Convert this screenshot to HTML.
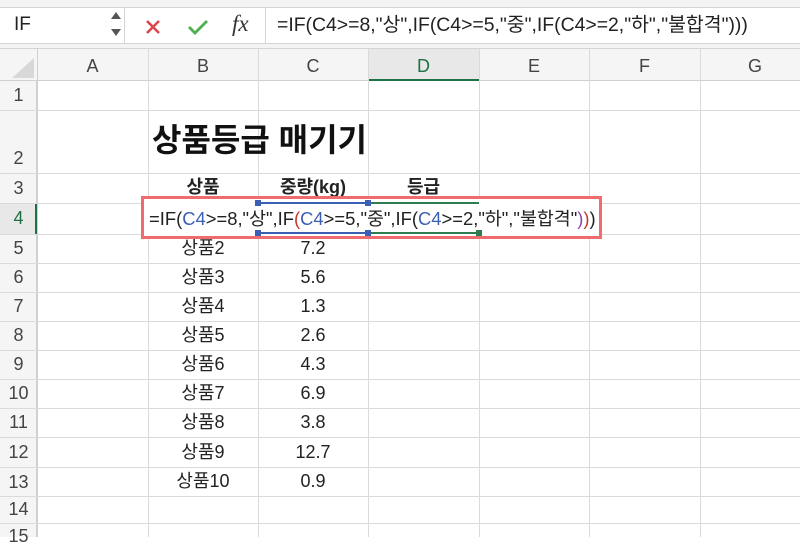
<!DOCTYPE html>
<html><head><meta charset="utf-8"><style>
*{margin:0;padding:0;box-sizing:border-box}
body{width:800px;height:537px;overflow:hidden;background:#fff;font-family:"Liberation Sans","Noto Sans CJK KR",sans-serif;position:relative;color:#222}
.abs{position:absolute}
.vl{position:absolute;width:1px;background:#dadada}
.hl{position:absolute;height:1px;background:#dadada;left:0;width:800px}
.ch{position:absolute;top:48px;height:33px;line-height:36px;text-align:center;font-size:18px;color:#444}
.rn{position:absolute;left:0;width:37px;text-align:center;font-size:18px;color:#444;height:29px;line-height:29px}
.c{position:absolute;text-align:center;font-size:18px;color:#222;height:29px;line-height:29px;white-space:nowrap}
</style></head><body>
<div class="abs" style="left:0;top:0;width:800px;height:48px;background:#f3f3f3"></div>
<div class="abs" style="left:0;top:7px;width:800px;height:37px;background:#fff;border-top:1px solid #d4d4d4;border-bottom:1px solid #d4d4d4"></div>
<div class="abs" style="left:0;top:7px;width:125px;height:37px;border-right:1px solid #d4d4d4;font-size:19px;line-height:36px;padding-left:14px">IF</div>
<div class="abs" style="left:111px;top:12px;width:0;height:0;border-left:5px solid transparent;border-right:5px solid transparent;border-bottom:7px solid #555"></div>
<div class="abs" style="left:111px;top:29px;width:0;height:0;border-left:5px solid transparent;border-right:5px solid transparent;border-top:7px solid #555"></div>
<svg class="abs" style="left:145px;top:19px" width="16" height="16"><path d="M2 2L14 14M14 2L2 14" stroke="#d9474b" stroke-width="2.6"/></svg>
<svg class="abs" style="left:187px;top:18px" width="22" height="18"><path d="M2 9L8 15L20 3" stroke="#4caf50" stroke-width="2.8" fill="none"/></svg>
<div class="abs" style="left:232px;top:11px;font-family:'Liberation Serif',serif;font-style:italic;font-size:23px;color:#333">fx</div>
<div class="abs" style="left:265px;top:7px;width:1px;height:37px;background:#d4d4d4"></div>
<div class="abs" style="left:277px;top:7px;font-size:19.4px;line-height:37px;height:37px;color:#222;white-space:nowrap">=IF(C4&gt;=8,"상",IF(C4&gt;=5,"중",IF(C4&gt;=2,"하","불합격")))</div>
<div class="abs" style="left:0;top:48px;width:800px;height:33px;background:#f5f5f5;border-top:1px solid #d4d4d4;border-bottom:1px solid #d0d0d0"></div>
<div class="abs" style="left:368px;top:49px;width:111px;height:32px;background:#e8e8e8"></div>
<div class="abs" style="left:368px;top:79px;width:111px;height:2px;background:#1e7145"></div>
<div class="abs" style="left:12px;top:58px;width:0;height:0;border-left:22px solid transparent;border-bottom:20px solid #d8d8d8"></div>
<div class="abs" style="left:0;top:81px;width:37px;height:456px;background:#f5f5f5;border-right:1px solid #d0d0d0"></div>
<div class="abs" style="left:0;top:203px;width:37px;height:31px;background:#e8e8e8"></div>
<div class="abs" style="left:35px;top:203px;width:2px;height:31px;background:#1e7145"></div>
<div class="ch" style="left:37px;width:111px">A</div>
<div class="ch" style="left:148px;width:110px">B</div>
<div class="ch" style="left:258px;width:110px">C</div>
<div class="ch" style="left:368px;width:111px;color:#1e7145">D</div>
<div class="ch" style="left:479px;width:110px">E</div>
<div class="ch" style="left:589px;width:111px">F</div>
<div class="ch" style="left:700px;width:110px">G</div>
<div class="vl" style="left:37px;top:48px;height:489px;background:#d0d0d0"></div>
<div class="vl" style="left:148px;top:48px;height:489px"></div>
<div class="vl" style="left:258px;top:48px;height:489px"></div>
<div class="vl" style="left:368px;top:48px;height:489px"></div>
<div class="vl" style="left:479px;top:48px;height:489px"></div>
<div class="vl" style="left:589px;top:48px;height:489px"></div>
<div class="vl" style="left:700px;top:48px;height:489px"></div>
<div class="hl" style="top:110px"></div>
<div class="hl" style="top:173px"></div>
<div class="hl" style="top:203px"></div>
<div class="hl" style="top:234px"></div>
<div class="hl" style="top:263px"></div>
<div class="hl" style="top:292px"></div>
<div class="hl" style="top:321px"></div>
<div class="hl" style="top:350px"></div>
<div class="hl" style="top:379px"></div>
<div class="hl" style="top:408px"></div>
<div class="hl" style="top:437px"></div>
<div class="hl" style="top:467px"></div>
<div class="hl" style="top:496px"></div>
<div class="hl" style="top:523px"></div>
<div class="rn" style="top:81px">1</div>
<div class="rn" style="top:144px">2</div>
<div class="rn" style="top:174px">3</div>
<div class="rn" style="top:204px;color:#1e7145">4</div>
<div class="rn" style="top:234px">5</div>
<div class="rn" style="top:263px">6</div>
<div class="rn" style="top:292px">7</div>
<div class="rn" style="top:321px">8</div>
<div class="rn" style="top:350px">9</div>
<div class="rn" style="top:379px">10</div>
<div class="rn" style="top:408px">11</div>
<div class="rn" style="top:438px">12</div>
<div class="rn" style="top:468px">13</div>
<div class="rn" style="top:495px">14</div>
<div class="rn" style="top:522px">15</div>
<div class="abs" style="left:152px;top:120px;font-size:32px;font-weight:bold;color:#111;line-height:40px;white-space:nowrap">상품등급 매기기</div>
<div class="c" style="left:148px;width:110px;top:173px;font-weight:bold">상품</div>
<div class="c" style="left:258px;width:110px;top:173px;font-weight:bold">중량(kg)</div>
<div class="c" style="left:368px;width:111px;top:173px;font-weight:bold">등급</div>
<div class="c" style="left:148px;width:110px;top:234px">상품2</div><div class="c" style="left:258px;width:110px;top:234px">7.2</div>
<div class="c" style="left:148px;width:110px;top:263px">상품3</div><div class="c" style="left:258px;width:110px;top:263px">5.6</div>
<div class="c" style="left:148px;width:110px;top:292px">상품4</div><div class="c" style="left:258px;width:110px;top:292px">1.3</div>
<div class="c" style="left:148px;width:110px;top:321px">상품5</div><div class="c" style="left:258px;width:110px;top:321px">2.6</div>
<div class="c" style="left:148px;width:110px;top:350px">상품6</div><div class="c" style="left:258px;width:110px;top:350px">4.3</div>
<div class="c" style="left:148px;width:110px;top:379px">상품7</div><div class="c" style="left:258px;width:110px;top:379px">6.9</div>
<div class="c" style="left:148px;width:110px;top:408px">상품8</div><div class="c" style="left:258px;width:110px;top:408px">3.8</div>
<div class="c" style="left:148px;width:110px;top:438px">상품9</div><div class="c" style="left:258px;width:110px;top:438px">12.7</div>
<div class="c" style="left:148px;width:110px;top:467px">상품10</div><div class="c" style="left:258px;width:110px;top:467px">0.9</div>
<div class="abs" style="left:141px;top:196px;width:461px;height:43px;background:#fff;border:3px solid #ef6b6e"></div>
<div class="abs" style="left:258px;top:202px;width:110px;height:32px;border-top:2px solid #3b5fb5;border-bottom:2px solid #3b5fb5"></div>
<div class="abs" style="left:368px;top:202px;width:111px;height:32px;border-top:2px solid #2e7d4f;border-bottom:2px solid #2e7d4f"></div>
<div class="abs" style="left:255px;top:200px;width:6px;height:6px;background:#3b5fb5"></div>
<div class="abs" style="left:365px;top:200px;width:6px;height:6px;background:#3b5fb5"></div>
<div class="abs" style="left:255px;top:230px;width:6px;height:6px;background:#3b5fb5"></div>
<div class="abs" style="left:365px;top:230px;width:6px;height:6px;background:#3b5fb5"></div>
<div class="abs" style="left:476px;top:230px;width:6px;height:6px;background:#2e7d4f"></div>
<div class="abs" style="left:149px;top:203px;height:31px;line-height:31px;font-size:18.4px;white-space:nowrap;color:#222">=IF(<span style="color:#3b5fb5">C4</span>&gt;=8,"상",IF<span style="color:#c0392b">(</span><span style="color:#3b5fb5">C4</span>&gt;=5,"중",IF(<span style="color:#3b5fb5">C4</span>&gt;=2,"하","불합격"<span style="color:#8e44ad">)</span><span style="color:#c0392b">)</span>)</div>
</body></html>
